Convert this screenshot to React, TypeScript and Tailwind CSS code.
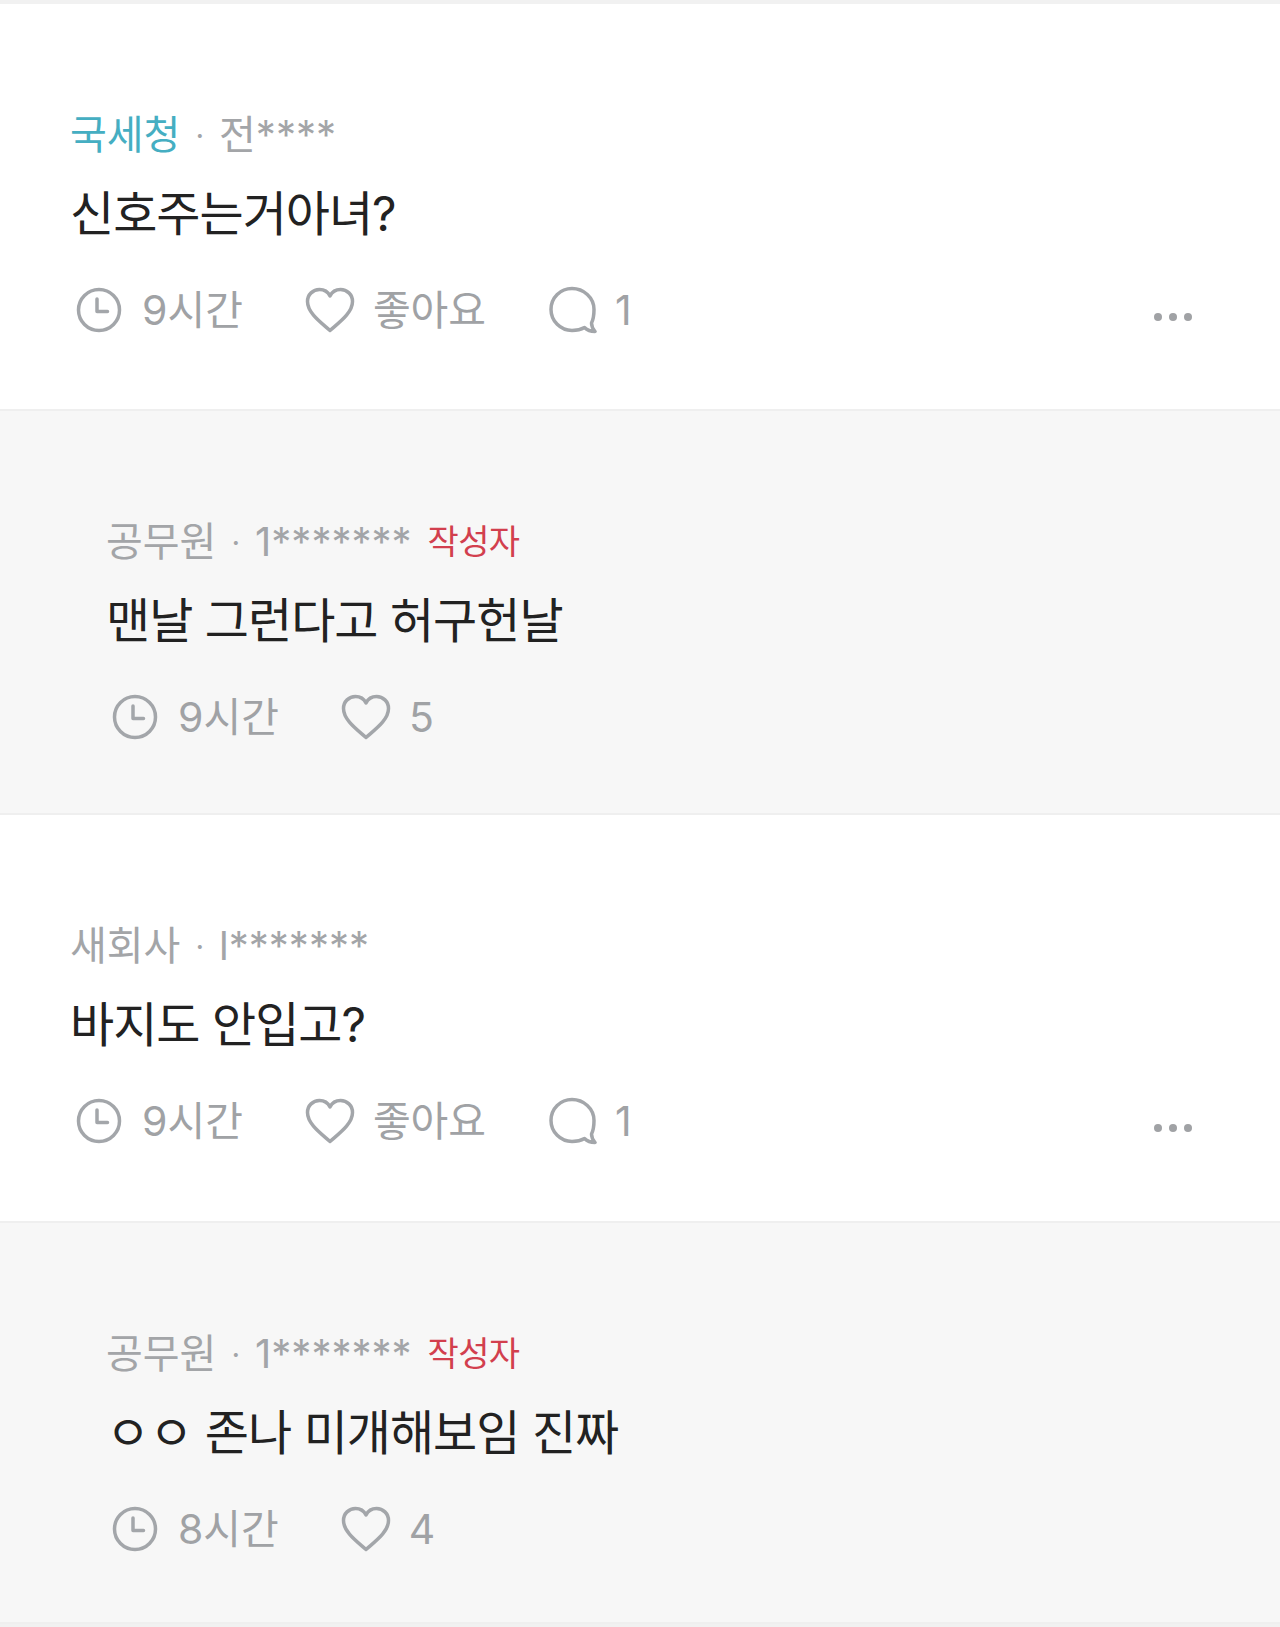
const font = { fontFamily: 'Inter, "Noto Sans CJK KR", "Noto Sans", sans-serif' };

function Clock() {
  return (
    <svg width="46" height="46" viewBox="0 0 46 46" fill="none" stroke="#a3a6aa" strokeWidth="3.500" strokeLinecap="round" strokeLinejoin="round">
      <circle cx="23" cy="23" r="20.5" />
      <path d="M21 12v12.5h10.5" />
    </svg>
  );
}

function Heart() {
  return (
    <svg width="50" height="46" viewBox="0 0 50 46" fill="none" stroke="#a3a6aa" strokeWidth="3.500" strokeLinejoin="round">
      <path d="M25 43.5C16 35.5 2.500 26 2.500 14.500C2.500 7.500 8 2.500 14.500 2.500C19 2.500 23 5 25 9C27 5 31 2.500 35.500 2.500C42 2.500 47.500 7.500 47.500 14.500C47.500 26 34 35.500 25 43.500Z" />
    </svg>
  );
}

function Bubble() {
  return (
    <svg width="48" height="48" viewBox="0 0 48 48" fill="none" stroke="#a3a6aa" strokeWidth="3.500" strokeLinejoin="round" strokeLinecap="round">
      <path d="M23 2.500C34.500 2.500 45 11.500 45 23.500C45 29 44 34 42.500 37C42.500 40 44 43 46 45.500C42 45.500 38.500 44.500 35.500 41.500C32 43.500 27.500 44.500 23 44.500C11.500 44.500 2 35 2 23.500C2 11.500 11.500 2.500 23 2.500Z" />
    </svg>
  );
}

function Stat({ icon, label, className }: { icon: React.ReactNode; label: string; className: string }) {
  return (
    <div className={`flex items-center ${className}`}>
      {icon}
      <span className="text-[41px] leading-[46px] font-normal text-[#a0a2a5]">{label}</span>
    </div>
  );
}

function Comment({
  reply,
  org,
  orgColor,
  user,
  author,
  body,
  time,
  likes,
  comments,
  heightClass,
}: {
  reply?: boolean;
  org: string;
  orgColor?: string;
  user: string;
  author?: boolean;
  body: string;
  time: string;
  likes: string;
  comments?: string;
  heightClass: string;
}) {
  return (
    <section className={`${reply ? "bg-[#f7f7f7] pl-[106px]" : "bg-white pl-[70px]"} ${heightClass} border-b-2 border-[#efefef] pr-[88px] pt-[107px]`}>
      <div className="flex items-center h-[48px] text-[40px] leading-[48px] font-normal text-[#a3a5a8]">
        <span className={orgColor}>{org}</span>
        <span className="mx-[15px] text-[30px]">·</span>
        <span>{user}</span>
        {author && <span className="ml-[16px] text-[34px] tracking-[-0.7px] text-[#d23f4e]">작성자</span>}
      </div>
      <p className="mt-[19px] text-[48px] leading-[72px] font-normal tracking-[-1px] text-[#222222]">{body}</p>
      <div className="mt-[35px] flex items-center h-[50px]">
        <Stat icon={<Clock />} label={time} className="ml-[6px] gap-[20px]" />
        <Stat icon={<Heart />} label={likes} className="ml-[62px] gap-[18px]" />
        {comments && <Stat icon={<Bubble />} label={comments} className="ml-[63px] gap-[18px]" />}
        {comments && (
          <div className="ml-auto mt-[14px] flex gap-[7px]">
            <span className="size-[8px] rounded-full bg-[#a0a2a5]" />
            <span className="size-[8px] rounded-full bg-[#a0a2a5]" />
            <span className="size-[8px] rounded-full bg-[#a0a2a5]" />
          </div>
        )}
      </div>
    </section>
  );
}

export default function App() {
  return (
    <div style={font} className="w-[1280px] h-[1627px] overflow-hidden bg-[#f1f1f1] pt-[4px]">
      <Comment org="국세청" orgColor="text-[#45aec2]" user="전****" body="신호주는거아녀?" time="9시간" likes="좋아요" comments="1" heightClass="h-[407px]" />
      <Comment reply org="공무원" user="1*******" author body="맨날 그런다고 허구헌날" time="9시간" likes="5" heightClass="h-[404px]" />
      <Comment org="새회사" user="l*******" body="바지도 안입고?" time="9시간" likes="좋아요" comments="1" heightClass="h-[408px]" />
      <Comment reply org="공무원" user="1*******" author body="ㅇㅇ 존나 미개해보임 진짜" time="8시간" likes="4" heightClass="h-[401px]" />
    </div>
  );
}
